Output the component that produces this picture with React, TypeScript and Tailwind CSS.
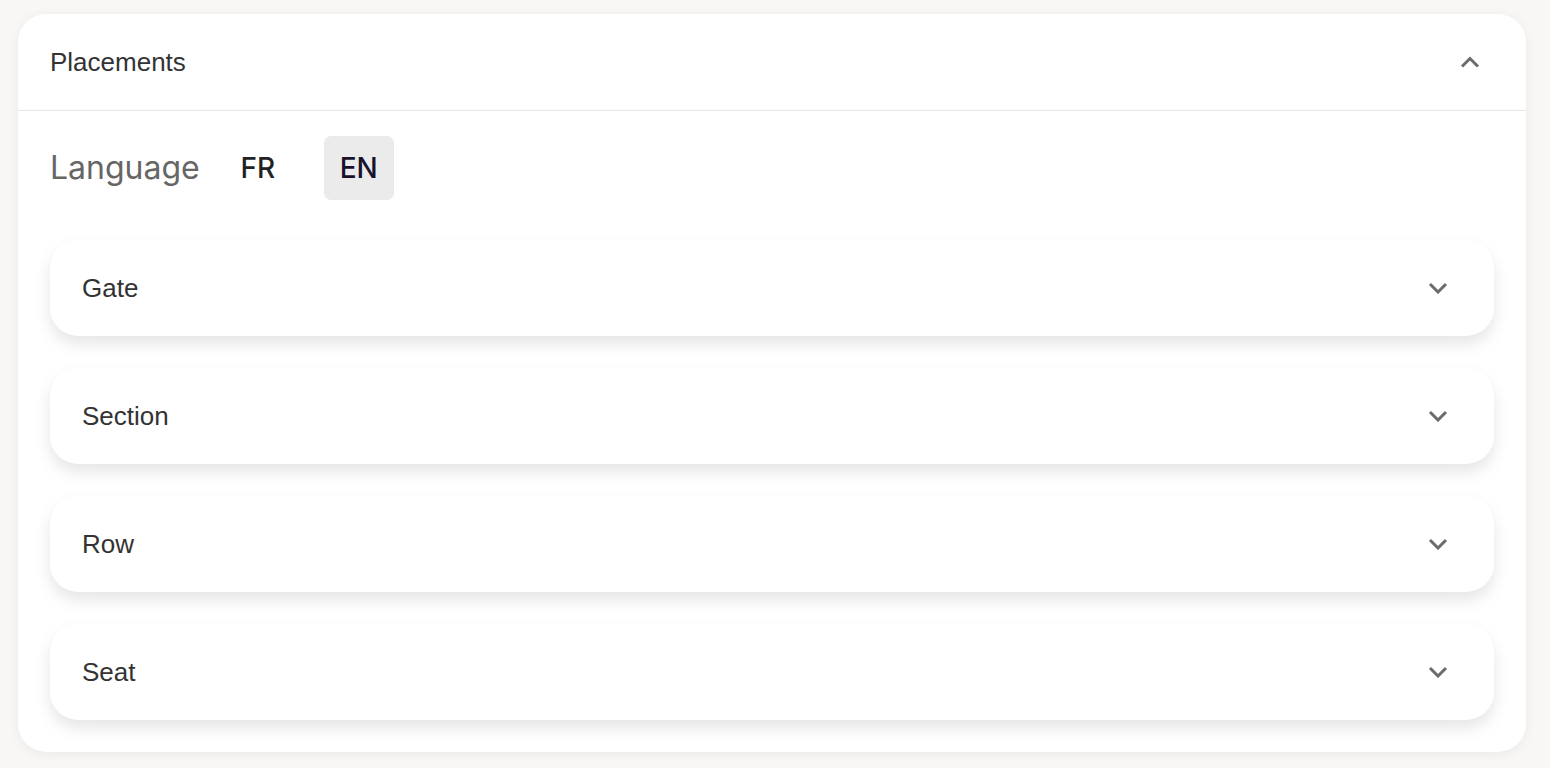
import React from "react";

function Chevron({ up = false }: { up?: boolean }) {
  return (
    <svg width="20" height="12" viewBox="0 0 20 12" className="shrink-0">
      <polyline
        points={up ? "2,10.5 10,2.5 18,10.5" : "2,2 10,10 18,2"}
        fill="none"
        stroke="#6b6b6b"
        strokeWidth="3"
        strokeLinejoin="miter"
      />
    </svg>
  );
}

const items = ["Gate", "Section", "Row", "Seat"];

export default function App() {
  return (
    <div className="min-h-screen w-full bg-[#f8f7f6] pt-[14px] pl-[18px] pr-[24px] pb-4">
      <div className="w-[1508px] rounded-[28px] bg-white shadow-[0_2px_12px_rgba(0,0,0,0.06)]">
        <div className="flex h-[97px] items-center justify-between border-b border-[#e6e6e6] pl-8 pr-[46px]">
          <span className="text-[26px] text-[#333] font-['Liberation_Sans',Arial,sans-serif]">Placements</span>
          <Chevron up />
        </div>
        <div className="px-8 pt-[25px] pb-8">
          <div className="flex h-[64px] items-center font-['Inter',sans-serif]">
            <span className="text-[32px] text-[#666]">Language</span>
            <button className="ml-[24px] flex h-[64px] w-[68px] items-center justify-center rounded-[7px] text-[28px] font-medium text-[#222]">
              FR
            </button>
            <button className="ml-[32px] flex h-[64px] w-[70px] items-center justify-center rounded-[7px] bg-[#ebebeb] text-[28px] font-medium text-[#17132b]">
              EN
            </button>
          </div>
          <div className="mt-[40px] flex flex-col gap-[32px]">
            {items.map((label) => (
              <div
                key={label}
                className="flex h-[96px] items-center justify-between rounded-[28px] bg-white pl-8 pr-[46px] shadow-[0_8px_16px_rgba(0,0,0,0.10)]"
              >
                <span className="text-[26px] text-[#333] font-['Liberation_Sans',Arial,sans-serif]">{label}</span>
                <Chevron />
              </div>
            ))}
          </div>
        </div>
      </div>
    </div>
  );
}
